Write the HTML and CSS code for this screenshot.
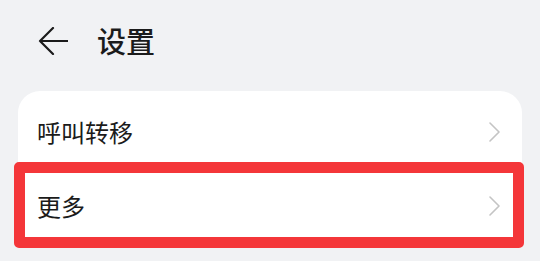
FILE: index.html
```html
<!DOCTYPE html>
<html lang="zh-CN">
<head>
    <meta charset="UTF-8">
    <meta name="viewport" content="width=device-width, initial-scale=1.0">
    <title>设置</title>
    <link rel="stylesheet" href="styles.css">
</head>
<body>
    <header class="topbar">
        <svg class="back" width="30" height="28" viewBox="0 0 30 28">
            <path d="M15 1 L2 14 L15 27 M2 14 L30 14" fill="none" stroke="#1b1b1b" stroke-width="2.2" stroke-linecap="round" stroke-linejoin="round"/>
        </svg>
        <h1 class="title">设置</h1>
    </header>
    <section class="card">
        <div class="row">
            <span class="label">呼叫转移</span>
            <svg class="chevron" width="11" height="20" viewBox="0 0 11 20">
                <path d="M1 1 L10 10 L1 19" fill="none" stroke="#c4c4c4" stroke-width="1.6" stroke-linecap="round" stroke-linejoin="round"/>
            </svg>
        </div>
        <div class="row">
            <span class="label">更多</span>
            <svg class="chevron" width="11" height="20" viewBox="0 0 11 20">
                <path d="M1 1 L10 10 L1 19" fill="none" stroke="#c4c4c4" stroke-width="1.6" stroke-linecap="round" stroke-linejoin="round"/>
            </svg>
        </div>
    </section>
    <div class="highlight"></div>
</body>
</html>
```

FILE: styles.css
```css
* {
    margin: 0;
    padding: 0;
    box-sizing: border-box;
}
body {
    font-family: "Noto Sans CJK SC", "Noto Sans", sans-serif;
    background: #f1f2f4;
    color: #1b1b1b;
    width: 540px;
    height: 261px;
    overflow: hidden;
    position: relative;
}
.topbar {
    height: 91px;
    display: flex;
    align-items: center;
    padding-left: 38px;
    padding-bottom: 10px;
    gap: 29px;
}
.back {
    display: block;
}
.title {
    font-size: 29px;
    font-weight: 500;
    line-height: 1;
}
.card {
    margin: 0 18px;
    background: white;
    border-radius: 22px;
    padding: 4px 0;
}
.row {
    height: 74px;
    display: flex;
    align-items: center;
    justify-content: space-between;
    padding: 0 22px 0 19px;
}
.label {
    font-size: 24px;
    line-height: 1;
}
.chevron {
    display: block;
}
.highlight {
    position: absolute;
    left: 14px;
    top: 162px;
    width: 510px;
    height: 86px;
    border: 11px solid #f43639;
    border-radius: 5px;
}
```
